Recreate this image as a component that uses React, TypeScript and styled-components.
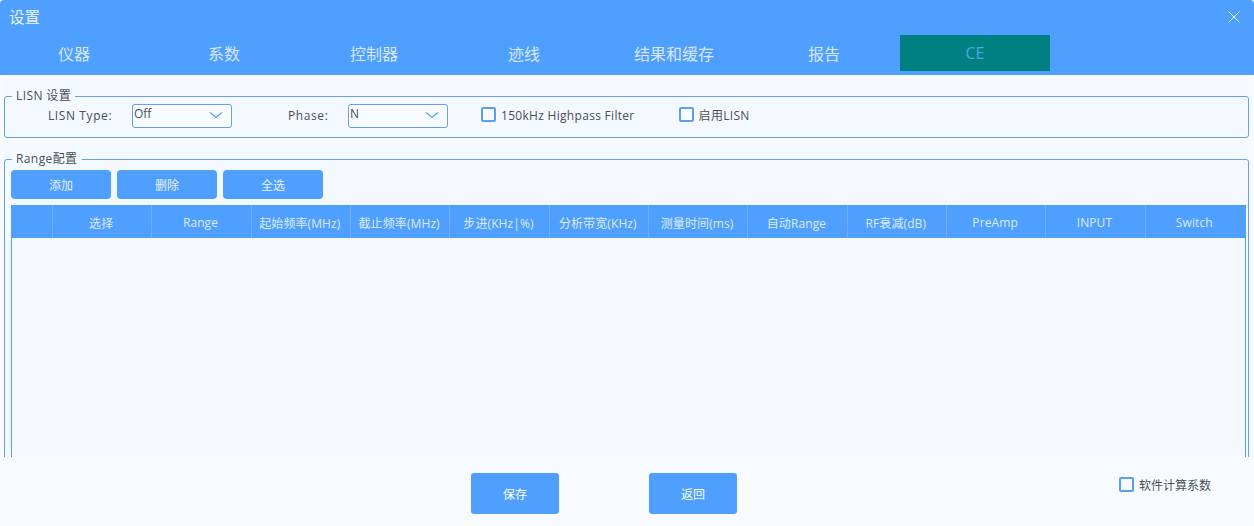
import React from "react";
import styled, { createGlobalStyle } from "styled-components";

const Global = createGlobalStyle`
  html, body { margin: 0; padding: 0; background: #ffffff; }
  body { font-family: "Open Sans", "Noto Sans CJK SC", sans-serif; }
  * { box-sizing: border-box; }
`;

const Win = styled.div`
  width: 1254px;
  height: 526px;
  background: #f7fbff;
  display: flex;
  flex-direction: column;
  overflow: hidden;
  border-radius: 4px;
`;

const Head = styled.header`
  height: 75px;
  flex: none;
  background: #4f9fff;
  display: flex;
  flex-direction: column;
`;

const TitleRow = styled.div`
  height: 35px;
  padding: 0 14px 2px 9px;
  display: flex;
  align-items: center;
  justify-content: space-between;
  font-size: 15.5px;
`;

const TitleText = styled.span`
  color: #eaf3ff;
`;

const Tabs = styled.nav`
  display: flex;
  height: 36px;
`;

const Tab = styled.div<{ $active?: boolean }>`
  width: 150px;
  padding: ${(p) => (p.$active ? "0 0 1px" : "0 2px 1px 0")};
  display: flex;
  align-items: center;
  justify-content: center;
  font-size: 16px;
  background: ${(p) => (p.$active ? "#008080" : "transparent")};
  color: ${(p) => (p.$active ? "#4aa8e0" : "#d6e7ff")};
`;

const Scroll = styled.main`
  flex: 1;
  min-height: 0;
  overflow: hidden;
  padding: 4px 5px 0 3px;
  display: flex;
  flex-direction: column;
  gap: 5px;
`;

const Section = styled.section<{ $top: number }>`
  flex: none;
  padding: ${(p) => p.$top}px 0 0 1px;
  background: #f4f9ff;
`;

const Group = styled.fieldset`
  margin: 0;
  padding: 0 2px 0 6px;
  min-width: 0;
  border: 1px solid #6a9fe0;
  border-radius: 3px;
`;

const Legend = styled.legend`
  margin-left: 1px;
  padding: 0 4px;
  font-size: 12px;
  line-height: 16px;
  letter-spacing: 0.4px;
  color: #4a4f57;
`;

const LisnRow = styled.div`
  height: 33px;
  display: flex;
  align-items: flex-start;
`;

const FieldLabel = styled.span<{ $left: number; $w: number }>`
  margin-left: ${(p) => p.$left}px;
  width: ${(p) => p.$w}px;
  font-size: 12px;
  line-height: 24px;
  letter-spacing: 0.6px;
  color: #4a4f57;
  white-space: nowrap;
`;

const Select = styled.div`
  width: 100px;
  height: 24px;
  border: 1px solid #6a9fe0;
  border-radius: 3px;
  background: #f8fbff;
  padding: 0 0 5px 1px;
  display: flex;
  align-items: center;
  justify-content: space-between;
  font-size: 12px;
  color: #4a4f57;
`;

const Chevron = styled.svg`
  width: 14px;
  height: 8px;
  margin: 3px 8px 0 0;
  fill: none;
  stroke: #4f9fff;
  stroke-width: 1.2;
`;

const Check = styled.label<{ $left?: number }>`
  margin-left: ${(p) => p.$left ?? 0}px;
  display: flex;
  align-items: center;
  gap: 5px;
  height: 22px;
  font-size: 12px;
  letter-spacing: 0.3px;
  color: #4a4f57;
  white-space: nowrap;
`;

const Box = styled.span`
  width: 15px;
  height: 15px;
  flex: none;
  border: 2px solid #5b9ff0;
  border-radius: 2px;
  background: #f8fbff;
  margin-top: -1px;
`;

const RangeGroup = styled(Group)`
  height: 320px;
`;

const Toolbar = styled.div`
  display: flex;
  gap: 6px;
  margin: 3px 0 6px;
`;

const ToolButton = styled.button`
  width: 100px;
  height: 29px;
  padding: 0;
  border: 0;
  border-radius: 4px;
  background: #4f9fff;
  color: #e6f1ff;
  font-family: inherit;
  font-size: 12px;
`;

const Table = styled.div`
  width: 1235px;
  height: 280px;
  border-left: 1px solid #4f9fff;
  border-right: 1px solid #4f9fff;
`;

const TableHead = styled.div`
  height: 33px;
  background: #4f9fff;
  display: grid;
  grid-template-columns: 41px repeat(12, 99.33px);
`;

const Th = styled.div`
  padding: 2px 2px 0 0;
  display: flex;
  align-items: center;
  justify-content: center;
  font-size: 12px;
  letter-spacing: 0.1px;
  color: #dcebff;
  white-space: nowrap;
  border-right: 1px solid #6eaeff;
  &:nth-child(13) { border-right: 0; }
`;

const Footer = styled.footer`
  height: 69px;
  flex: none;
  display: flex;
  align-items: flex-start;
  padding-top: 16px;
`;

const FootButton = styled.button<{ $left: number }>`
  margin-left: ${(p) => p.$left}px;
  width: 88px;
  height: 41px;
  padding: 0;
  border: 0;
  border-radius: 3px;
  background: #4f9fff;
  color: #fff;
  font-family: inherit;
  font-size: 12px;
`;

const FootCheck = styled(Check)`
  margin-left: 382px;
  height: 24px;
  letter-spacing: 0;
`;

const cols = ["", "选择", "Range", "起始频率(MHz)", "截止频率(MHz)", "步进(KHz|%)", "分析带宽(KHz)", "测量时间(ms)", "自动Range", "RF衰减(dB)", "PreAmp", "INPUT", "Switch"];
const tabs = ["仪器", "系数", "控制器", "迹线", "结果和缓存", "报告"];

export default function App() {
  return (
    <Win>
      <Global />
      <Head>
        <TitleRow>
          <TitleText>设置</TitleText>
          <svg width="12" height="12" viewBox="0 0 12 12" fill="none" stroke="#fff" strokeWidth="0.9">
            <path d="M0.5 0.5 L11.5 11.5 M11.5 0.5 L0.5 11.5" />
          </svg>
        </TitleRow>
        <Tabs>
          {tabs.map((t) => <Tab key={t}>{t}</Tab>)}
          <Tab $active>CE</Tab>
        </Tabs>
      </Head>
      <Scroll>
        <Section $top={9}>
          <Group>
            <Legend>LISN 设置</Legend>
            <LisnRow>
              <FieldLabel $left={37} $w={84}>LISN Type:</FieldLabel>
              <Select>Off<Chevron viewBox="0 0 14 8"><path d="M1 1.5 L7 6.5 L13 1.5" /></Chevron></Select>
              <FieldLabel $left={56} $w={60}>Phase:</FieldLabel>
              <Select>N<Chevron viewBox="0 0 14 8"><path d="M1 1.5 L7 6.5 L13 1.5" /></Chevron></Select>
              <Check $left={33}><Box />150kHz Highpass Filter</Check>
              <Check $left={44}><Box />启用LISN</Check>
            </LisnRow>
          </Group>
        </Section>
        <Section $top={8}>
          <RangeGroup>
            <Legend>Range配置</Legend>
            <Toolbar>
              <ToolButton>添加</ToolButton>
              <ToolButton>删除</ToolButton>
              <ToolButton>全选</ToolButton>
            </Toolbar>
            <Table>
              <TableHead>
                {cols.map((c, i) => <Th key={i}>{c}</Th>)}
              </TableHead>
            </Table>
          </RangeGroup>
        </Section>
      </Scroll>
      <Footer>
        <FootButton $left={471}>保存</FootButton>
        <FootButton $left={90}>返回</FootButton>
        <FootCheck><Box />软件计算系数</FootCheck>
      </Footer>
    </Win>
  );
}
